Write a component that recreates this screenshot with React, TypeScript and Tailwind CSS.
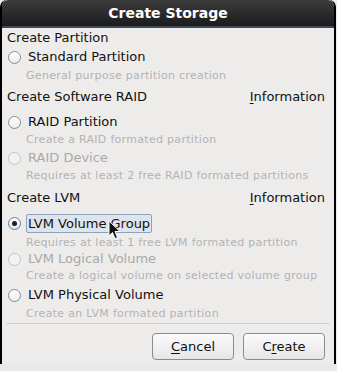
const font = { fontFamily: '"DejaVu Sans", "Liberation Sans", sans-serif' }

function Radio({ checked = false, disabled = false }: { checked?: boolean; disabled?: boolean }) {
  return (
    <span
      className={`flex h-[13px] w-[13px] shrink-0 items-center justify-center rounded-full border ${
        checked
          ? 'border-[#5d7fa8] bg-gradient-to-b from-[#ffffff] to-[#dfe6ee]'
          : disabled
            ? 'border-[#c4c4c4] bg-[#f2f2f2]'
            : 'border-[#8a8a8a] bg-gradient-to-b from-[#ffffff] to-[#ececec]'
      }`}
    >
      {checked && <span className="h-[5px] w-[5px] rounded-full bg-[#1e1e1e]" />}
    </span>
  )
}

function Option({
  label,
  checked,
  disabled,
  focused,
  h,
}: {
  label: string
  checked?: boolean
  disabled?: boolean
  focused?: boolean
  h: string
}) {
  return (
    <div className={`flex items-center pl-[6px] ${h}`}>
      <Radio checked={checked} disabled={disabled} />
      {focused ? (
        <span className="ml-[5px] rounded-[2px] border border-[#8ca3c0] bg-[#dfe4ea] px-[1px] leading-[17px] text-[13px] text-[#111]">
          {label}
        </span>
      ) : (
        <span className={`ml-[7px] text-[13px] ${disabled ? 'text-[#a9a9a9]' : 'text-[#111]'}`}>{label}</span>
      )}
    </div>
  )
}

function Desc({ text, h }: { text: string; h: string }) {
  return <div className={`flex items-center pl-[24px] text-[11px] tracking-[0.3px] text-[#b3b3b3] ${h}`}>{text}</div>
}

function Header({ text, info, h }: { text: string; info?: boolean; h: string }) {
  return (
    <div className={`flex items-center justify-between pl-[5px] pr-[9px] text-[13px] text-[#111] ${h}`}>
      <span>{text}</span>
      {info && (
        <span>
          <span className="underline underline-offset-2">I</span>nformation
        </span>
      )}
    </div>
  )
}

export default function App() {
  return (
    <div className="h-[371px] w-[337px] overflow-hidden bg-[#e9e9e9]" style={font}>
      <div className="relative w-[336px] rounded-t-[7px] border-x-2 border-black bg-[#edeceb]">
        <div className="flex h-[28px] items-center justify-center rounded-t-[6px] border-b-2 border-[#3d4c5c] bg-gradient-to-b from-[#3c3c3c] to-[#1c1c1c] text-[14px] font-bold text-white">
          Create Storage
        </div>

        <Header text="Create Partition" h="h-[20px]" />
        <Option label="Standard Partition" h="h-[18px]" />
        <Desc text="General purpose partition creation" h="h-[20px]" />

        <Header text="Create Software RAID" info h="h-[22px]" />
        <Option label="RAID Partition" h="h-[18px] mt-[5px]" />
        <Desc text="Create a RAID formated partition" h="h-[18px]" />
        <Option label="RAID Device" disabled h="h-[18px]" />
        <Desc text="Requires at least 2 free RAID formated partitions" h="h-[18px]" />

        <Header text="Create LVM" info h="h-[26px]" />
        <Option label="LVM Volume Group" checked focused h="h-[24px]" />
        <Desc text="Requires at least 1 free LVM formated partition" h="h-[16px]" />
        <Option label="LVM Logical Volume" disabled h="h-[16px]" />
        <Desc text="Create a logical volume on selected volume group" h="h-[18px]" />
        <Option label="LVM Physical Volume" h="h-[20px]" />
        <Desc text="Create an LVM formated partition" h="h-[18px]" />

        <div className="mx-[4px] border-t border-[#cfcfcf]" />

        <div className="flex justify-end gap-[9px] pr-[9px] pt-[9px] pb-[4px]">
          <button className="h-[27px] w-[82px] rounded-[4px] border border-[#8c8c8c] bg-gradient-to-b from-[#fbfbfb] to-[#e6e6e6] text-[13px] text-[#111]">
            <span className="underline underline-offset-2">C</span>ancel
          </button>
          <button className="h-[27px] w-[82px] rounded-[4px] border border-[#8c8c8c] bg-gradient-to-b from-[#fbfbfb] to-[#e6e6e6] text-[13px] text-[#111]">
            C<span className="underline underline-offset-2">r</span>eate
          </button>
        </div>

        <svg className="absolute left-[106px] top-[220px]" width="13" height="20" viewBox="0 0 13 20">
          <path d="M1 1 L1 16 L4.5 12.5 L7 18.5 L9.5 17.5 L7 11.5 L12 11.5 Z" fill="#111" stroke="#fff" strokeWidth="1" />
        </svg>
      </div>
    </div>
  )
}
